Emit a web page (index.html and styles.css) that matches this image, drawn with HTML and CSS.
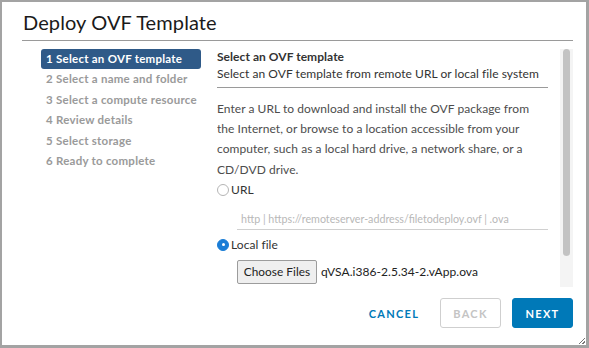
FILE: index.html
```html
<!DOCTYPE html>
<html>
<head>
<meta charset="utf-8">
<link rel="stylesheet" href="styles.css">
</head>
<body>
<div class="dialog">
  <div class="header"><h1 class="title">Deploy OVF Template</h1></div>
  <div class="main">
    <nav class="steps">
      <div class="step active">1 Select an OVF template</div>
      <div class="step">2 Select a name and folder</div>
      <div class="step">3 Select a compute resource</div>
      <div class="step">4 Review details</div>
      <div class="step">5 Select storage</div>
      <div class="step">6 Ready to complete</div>
    </nav>
    <section class="content">
      <div class="inner">
        <div class="sec-head">
          <div class="sec-title">Select an OVF template</div>
          <div class="sec-sub">Select an OVF template from remote URL or local file system</div>
        </div>
        <p class="desc">Enter a URL to download and install the OVF package from the Internet, or browse to a location accessible from your computer, such as a local hard drive, a network share, or a CD/DVD drive.</p>
        <label class="radio"><span class="dot"></span><span>URL</span></label>
        <div class="url-field"><span class="placeholder">http | https://remoteserver-address/filetodeploy.ovf | .ova</span></div>
        <label class="radio"><span class="dot checked"></span><span>Local file</span></label>
        <div class="file-row"><span class="file-btn">Choose Files</span><span class="file-name">qVSA.i386-2.5.34-2.vApp.ova</span></div>
      </div>
      <div class="scrollbar"><div class="thumb"></div></div>
    </section>
  </div>
  <div class="footer">
    <button class="btn link">CANCEL</button>
    <button class="btn outline" disabled>BACK</button>
    <button class="btn primary">NEXT</button>
  </div>
  <span class="grip"></span>
</div>
</body>
</html>
```
FILE: styles.css
```css
* { box-sizing: border-box; }
html, body { margin: 0; padding: 0; }
body {
  width: 589px;
  height: 348px;
  font-family: Lato, "Liberation Sans", sans-serif;
  background: #fff;
  overflow: hidden;
}
.dialog {
  position: relative;
  width: 589px;
  height: 348px;
  border-style: solid;
  border-color: #a3a3a3;
  border-width: 2px 3px 3px 2px;
  padding: 0 13px 0 20px;
  display: flex;
  flex-direction: column;
}
.header {
  height: 39px;
  border-bottom: 1px solid #9a9a9a;
  display: flex;
  align-items: flex-end;
}
.title {
  margin: 0 0 6px 1px;
  font-size: 20px;
  font-weight: 400;
  color: #1a1a1a;
  line-height: 24px;
  letter-spacing: 0.1px;
}
.main {
  display: flex;
  height: 246px;
  padding-top: 8px;
}
.steps {
  width: 160px;
  margin-left: 19px;
  display: flex;
  flex-direction: column;
}
.step {
  height: 20.4px;
  line-height: 20.4px;
  padding-left: 5px;
  font-size: 11.5px;
  font-weight: 700;
  color: #9a9a9a;
  white-space: nowrap;
  letter-spacing: 0.25px;
}
.step.active {
  background: #2f5a88;
  color: #fff;
  border-radius: 3px;
}
.content {
  flex: 1;
  margin-left: 16px;
  display: flex;
  overflow: hidden;
}
.inner {
  width: 331px;
  color: #4d4d4d;
  font-size: 12px;
  letter-spacing: 0.05px;
}
.sec-head {
  border-bottom: 1px solid #9a9a9a;
  padding-bottom: 3px;
}
.sec-title {
  font-weight: 700;
  color: #333;
  line-height: 15px;
}
.sec-sub {
  line-height: 20px;
  color: #333;
}
.desc {
  margin: 11px 0 0;
  line-height: 20.2px;
}
.radio {
  display: flex;
  align-items: center;
  height: 20px;
  gap: 2px;
  color: #333;
}
.dot {
  width: 12px;
  height: 12px;
  border-radius: 50%;
  border: 1px solid #b5b5b5;
  background: #fff;
  display: flex;
  align-items: center;
  justify-content: center;
}
.dot.checked {
  background: #1a7dd6;
  border-color: #1a7dd6;
}
.dot.checked::after {
  content: "";
  width: 3px;
  height: 3px;
  border-radius: 50%;
  background: #fff;
}
.url-field {
  margin: 9px 0 0 20px;
  height: 21px;
  border-bottom: 1px solid #d0d0d0;
  padding-left: 4px;
  line-height: 20px;
}
.placeholder {
  color: #b8b8b8;
  font-size: 10.7px;
  letter-spacing: 0;
}
.url-field + .radio { margin-top: 5px; }
.file-row {
  margin: 5px 0 0 20px;
  display: flex;
  align-items: center;
  gap: 4px;
}
.file-btn {
  width: 80px;
  height: 24px;
  border: 1px solid #9c9c9c;
  background: #efefef;
  border-radius: 2px;
  display: flex;
  align-items: center;
  justify-content: center;
  color: #222;
  font-size: 11.8px;
}
.file-name { color: #222; }
.scrollbar {
  width: 13px;
  margin-left: 12px;
  background: #f4f4f4;
  padding: 0 2px;
}
.thumb {
  height: 207px;
  background: #c3c3c3;
  border-radius: 4px;
  width: 7px;
  margin-left: 1px;
}
.footer {
  flex: 1;
  display: flex;
  justify-content: flex-end;
  align-items: flex-start;
  padding-top: 11px;
  gap: 11px;
}
.btn {
  height: 30px;
  font-family: Lato, "Liberation Sans", sans-serif;
  font-size: 11px;
  font-weight: 700;
  letter-spacing: 1.3px;
  border-radius: 3px;
  padding: 0;
  cursor: pointer;
}
.btn.link {
  background: transparent;
  border: none;
  color: #0079b8;
  width: 70px;
}
.btn.outline {
  width: 61px;
  background: #fff;
  border: 1px solid #cfcfcf;
  color: #c4c4c4;
}
.btn.primary {
  width: 61px;
  background: #0079b8;
  border: 1px solid #0079b8;
  color: #fff;
}
.grip {
  position: absolute;
  right: 1px;
  bottom: 1px;
  width: 6px;
  height: 6px;
  background: linear-gradient(135deg, transparent 45%, #777 45%, #777 55%, transparent 55%, transparent 75%, #777 75%, #777 85%, transparent 85%);
}
```
